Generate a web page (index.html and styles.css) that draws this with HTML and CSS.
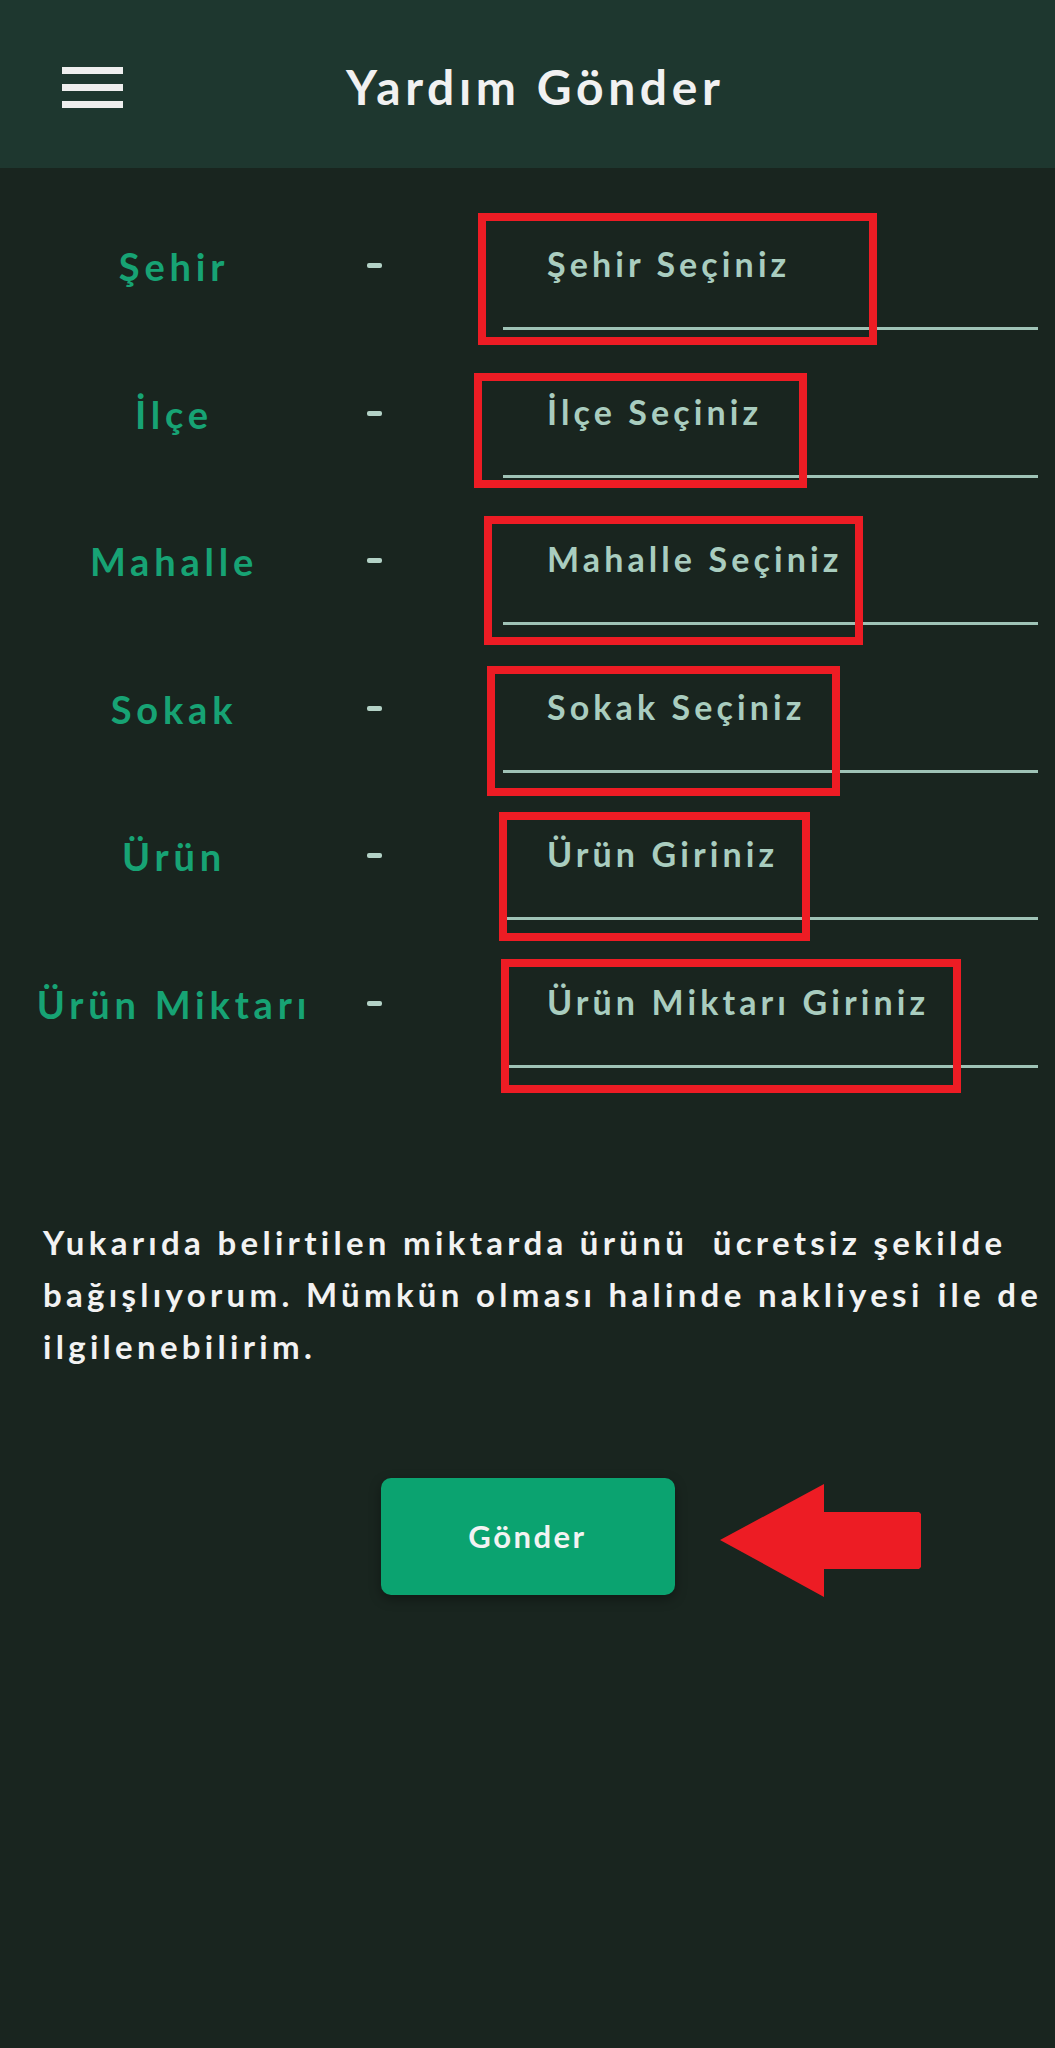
FILE: index.html
```html
<!DOCTYPE html>
<html lang="tr">
<head>
<meta charset="utf-8">
<title>Yardım Gönder</title>
<link rel="stylesheet" href="styles.css">
</head>
<body>
<header class="topbar">
  <div class="menu"><span></span><span></span><span></span></div>
  <h1 class="title">Yardım Gönder</h1>
</header>
<main class="form">
  <div class="row">
    <div class="label">Şehir</div>
    <div class="dash"></div>
    <div class="field"><span class="ph">Şehir Seçiniz</span><span class="mark m1"></span></div>
  </div>
  <div class="row">
    <div class="label">İlçe</div>
    <div class="dash"></div>
    <div class="field"><span class="ph">İlçe Seçiniz</span><span class="mark m2"></span></div>
  </div>
  <div class="row">
    <div class="label">Mahalle</div>
    <div class="dash"></div>
    <div class="field"><span class="ph">Mahalle Seçiniz</span><span class="mark m3"></span></div>
  </div>
  <div class="row">
    <div class="label">Sokak</div>
    <div class="dash"></div>
    <div class="field"><span class="ph">Sokak Seçiniz</span><span class="mark m4"></span></div>
  </div>
  <div class="row">
    <div class="label">Ürün</div>
    <div class="dash"></div>
    <div class="field"><span class="ph">Ürün Giriniz</span><span class="mark m5"></span></div>
  </div>
  <div class="row">
    <div class="label">Ürün Miktarı</div>
    <div class="dash"></div>
    <div class="field"><span class="ph">Ürün Miktarı Giriniz</span><span class="mark m6"></span></div>
  </div>
  <p class="note">Yukarıda belirtilen miktarda ürünü &nbsp;ücretsiz şekilde<br>bağışlıyorum. Mümkün olması halinde nakliyesi <span class="gap"></span>ile de<br>ilgilenebilirim.</p>
  <div class="actions">
    <div class="btnwrap">
      <button class="send">Gönder</button>
      <svg class="arrow" viewBox="0 0 201 113" width="201" height="113"><polygon points="0,56 104,0 104,28 199,28 201,30 201,83 199,85 104,85 104,113" fill="#ed1c24"/></svg>
    </div>
  </div>
</main>
</body>
</html>
```

FILE: styles.css
```css
* { box-sizing: border-box; }
html, body { margin: 0; padding: 0; }
body {
  background: #19251f;
  font-family: "Lato", "Noto Sans", sans-serif;
  width: 1055px;
  min-height: 2048px;
}
.topbar {
  height: 168px;
  background: #1e372f;
  display: flex;
  align-items: center;
  padding: 6px 0 0 62px;
}
.menu {
  width: 61px;
  display: flex;
  flex-direction: column;
  gap: 10px;
}
.menu span {
  display: block;
  height: 7px;
  background: #eeeeee;
}
.title {
  margin: 0 0 0 223px;
  color: #f1f1f1;
  font-size: 48px;
  font-weight: 700;
  letter-spacing: 4.6px;
  line-height: 1;
}
.form {
  padding-top: 32px;
}
.row {
  height: 147.6px;
  display: grid;
  grid-template-columns: 348px 155px 1fr;
  align-items: start;
  padding-right: 17px;
}
.label {
  padding-top: 41px;
  text-align: center;
  color: #17a374;
  font-size: 38px;
  font-weight: 700;
  letter-spacing: 4.8px;
  line-height: 50px;
  white-space: nowrap;
}
.dash {
  margin: 63px 0 0 19px;
  width: 15px;
  height: 5px;
  border-radius: 2px;
  background: #b3d2c6;
}
.field {
  position: relative;
  height: 130px;
  border-bottom: 3px solid #9fc3b6;
  padding: 44px 0 0 44px;
}
.ph {
  display: block;
  color: #a9cdbf;
  font-size: 34px;
  font-weight: 700;
  letter-spacing: 4.1px;
  line-height: 40px;
  white-space: nowrap;
}
.mark {
  position: absolute;
  border: 8px solid #ed1c24;
}
.m1 { left: -25px; top: 13px; width: 399px; height: 132px; }
.m2 { left: -29px; top: 25px; width: 333px; height: 115px; }
.m3 { left: -19px; top: 21px; width: 379px; height: 129px; }
.m4 { left: -16px; top: 23px; width: 353px; height: 130px; }
.m5 { left: -4px; top: 22px; width: 311px; height: 129px; }
.m6 { left: -2px; top: 21px; width: 460px; height: 134px; }
.note {
  margin: 130px 0 0 43px;
  color: #f2f2f2;
  font-size: 33px;
  font-weight: 700;
  letter-spacing: 4.3px;
  line-height: 52px;
  white-space: nowrap;
}
.gap {
  display: inline-block;
  width: 2px;
}
.actions {
  margin-top: 106px;
  display: flex;
  justify-content: center;
}
.btnwrap {
  position: relative;
}
.send {
  display: block;
  width: 294px;
  height: 117px;
  border: none;
  border-radius: 10px;
  background: #0ba370;
  color: #f3f3f3;
  font-family: "Lato", "Noto Sans", sans-serif;
  font-size: 31px;
  font-weight: 700;
  letter-spacing: 2.5px;
  box-shadow: 0 4px 12px rgba(0, 0, 0, 0.35);
}
.arrow {
  position: absolute;
  left: 339px;
  top: 6px;
}
```
